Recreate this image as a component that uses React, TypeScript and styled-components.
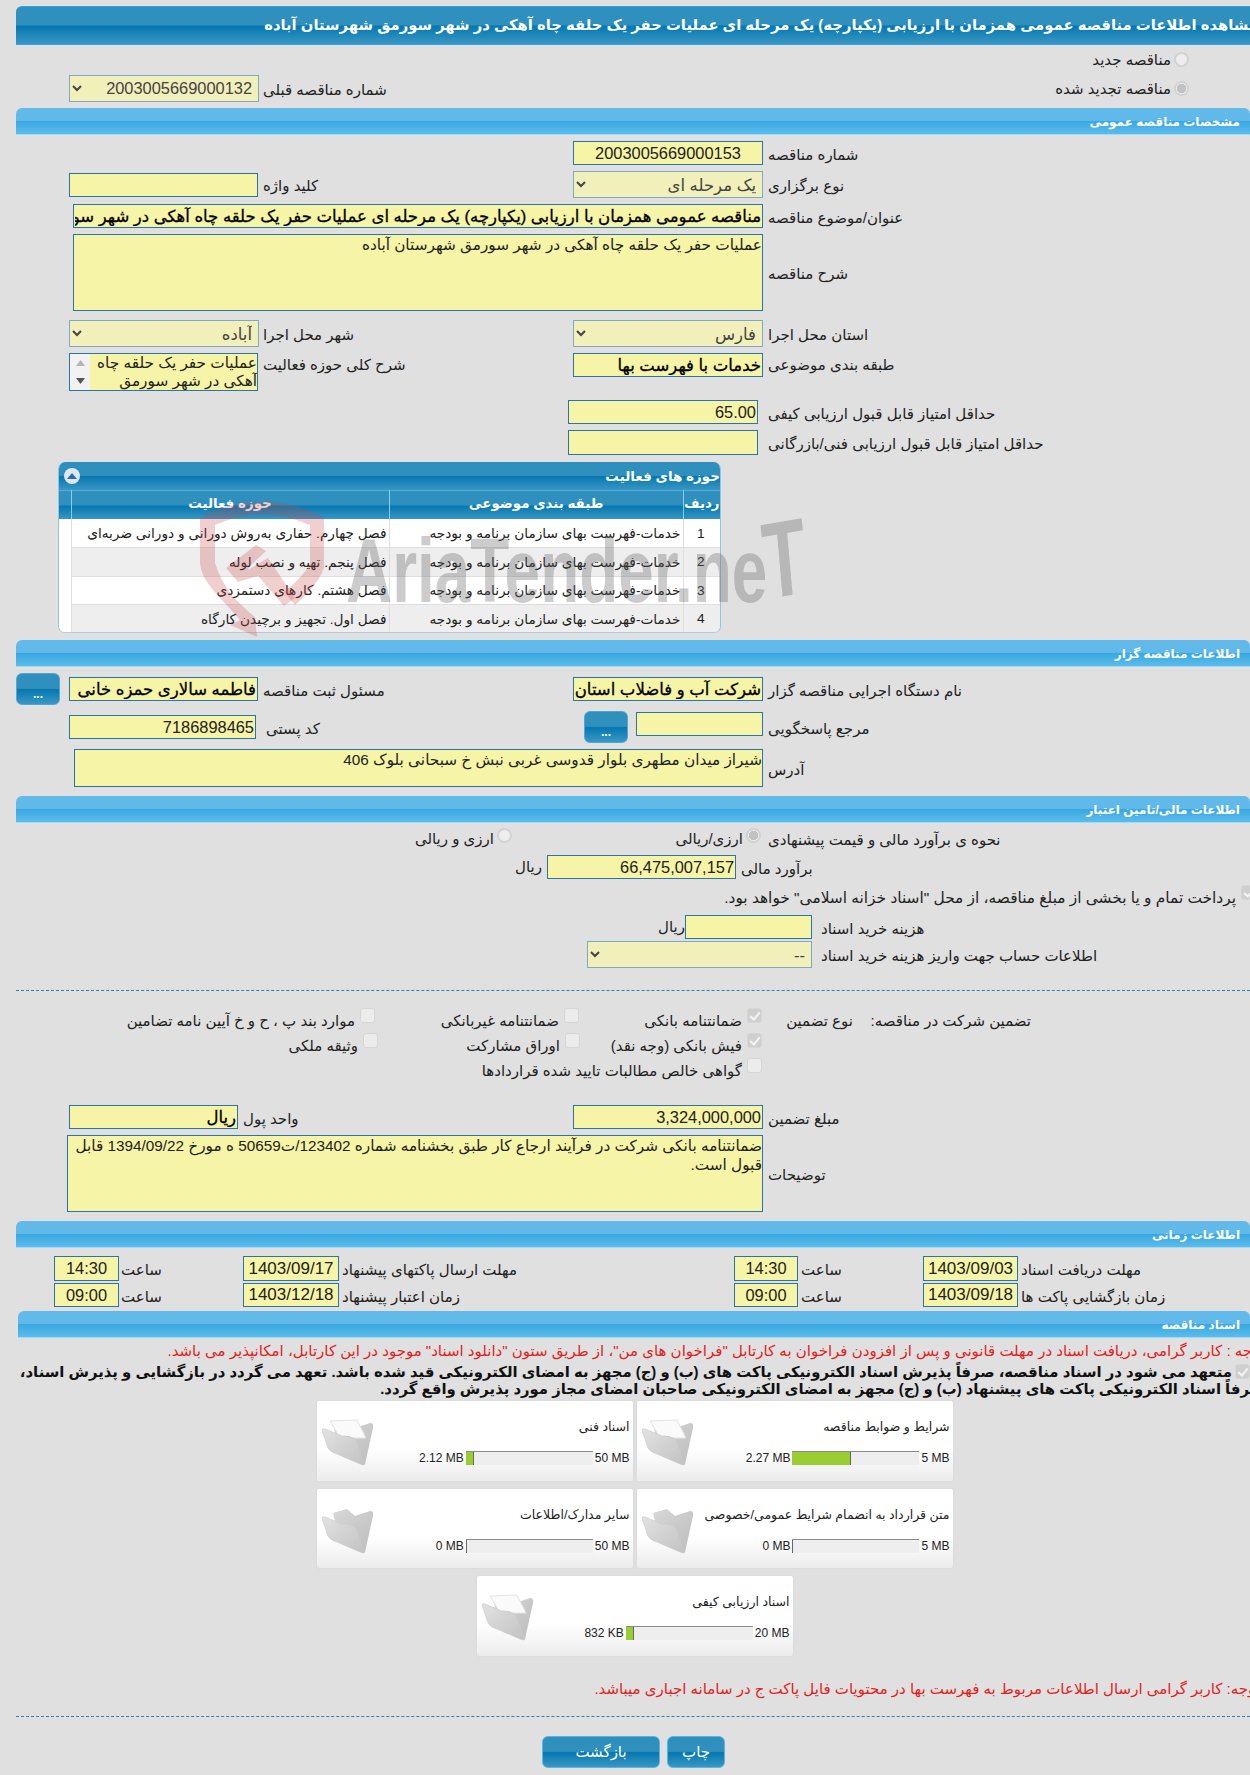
import React from "react";
import styled, { createGlobalStyle } from "styled-components";

const TEXT_FONT = `"Liberation Sans", "DejaVu Sans", sans-serif`;

const darkBar = `linear-gradient(to bottom, #2f90bd 0%, #2f8fbd 48%, #0578b0 52%, #3a97c3 100%)`;
const lightBar = `linear-gradient(to bottom, #62baea 0%, #60b9e9 48%, #39a8e0 52%, #5bbcec 100%)`;

const GlobalStyle = createGlobalStyle`
  html, body {
    margin: 0;
    padding: 0;
    background: #e0e0e0;
  }
  body {
    font-family: ${TEXT_FONT};
    font-size: 15px;
    color: #222;
  }
`;

const Page = styled.div`
  position: relative;
  width: 1250px;
  height: 1775px;
  overflow: hidden;
  direction: rtl;
  background: #e0e0e0;
`;

const TitleBar = styled.div`
  margin: 6px 0 0 16px;
  height: 39px;
  box-sizing: border-box;
  border-top: 1px solid #36a2e6;
  border-bottom: 1px solid #36a2e6;
  border-top-left-radius: 6px;
  background: ${darkBar};
  color: #fff;
  font-size: 14.8px;
  font-weight: bold;
  line-height: 37px;
  white-space: nowrap;
  overflow: hidden;
`;

const TitleText = styled.span`
  display: inline-block;
  margin-right: -8px;
`;

const SectionBar = styled.div<{ $top: number; $left?: number }>`
  margin: ${(p) => p.$top}px 0 0 ${(p) => p.$left ?? 16}px;
  height: 27px;
  box-sizing: border-box;
  border-bottom: 1px solid #9bdcf7;
  border-top-left-radius: 6px;
  border-top-right-radius: 6px;
  background: ${lightBar};
  color: #fff;
  font-size: 12px;
  font-weight: bold;
  line-height: 28px;
  padding-right: 10px;
`;

const FormRow = styled.div<{ $top: number; $h: number; $cols?: string; $align?: string }>`
  display: grid;
  grid-template-columns: ${(p) => p.$cols ?? "482px 195px 315px 189px 69px"};
  align-items: ${(p) => p.$align ?? "center"};
  margin-top: ${(p) => p.$top}px;
  height: ${(p) => p.$h}px;
`;

const Label = styled.label<{ $pad?: number }>`
  text-align: left;
  padding-top: 3px;
  padding-left: ${(p) => p.$pad ?? 0}px;
  font-size: 15px;
  white-space: nowrap;
  color: #222;
`;

const fieldBase = `
  box-sizing: border-box;
  display: block;
  background: #f6f4a6;
  border: 1px solid #2a75a8;
  border-radius: 0;
  padding: 0 1px;
  margin: 0;
  outline: none;
  direction: rtl;
  font-family: ${TEXT_FONT};
  color: #222;
`;

const Field = styled.input<{ $w: number; $h?: number; $mr?: number; $strong?: boolean; $size?: number; $center?: boolean }>`
  ${fieldBase}
  width: ${(p) => p.$w}px;
  height: ${(p) => p.$h ?? 24}px;
  margin-right: ${(p) => p.$mr ?? 5}px;
  font-size: ${(p) => p.$size ?? (p.$strong ? 16.5 : 16.4)}px;
  color: ${(p) => (p.$strong ? "#000" : "#222")};
  -webkit-text-stroke: ${(p) => (p.$strong ? "0.3px #000" : "0")};
  text-align: ${(p) => (p.$center ? "center" : "right")};
`;

const Area = styled.textarea<{ $w: number; $h: number; $mr?: number }>`
  ${fieldBase}
  width: ${(p) => p.$w}px;
  height: ${(p) => p.$h}px;
  margin-right: ${(p) => p.$mr ?? 5}px;
  padding: 0;
  resize: none;
  overflow: hidden;
  font-size: 15.3px;
  line-height: 19px;
`;

const Dropdown = styled.select<{ $w: number; $mr?: number; $size?: number }>`
  ${fieldBase}
  width: ${(p) => p.$w}px;
  height: 27px;
  margin-right: ${(p) => p.$mr ?? 5}px;
  background: #f1efba;
  border: 1px solid #7fa9c2;
  font-size: ${(p) => p.$size ?? 16.5}px;
  color: #444;
  opacity: 1;
  padding-right: 2px;
`;

const Wide = styled.div<{ $from: number; $to: number }>`
  grid-column: ${(p) => p.$from} / ${(p) => p.$to};
`;

const InlineCell = styled.div<{ $gap?: number; $mr?: number }>`
  display: flex;
  align-items: center;
  gap: ${(p) => p.$gap ?? 0}px;
  margin-right: ${(p) => p.$mr ?? 0}px;
  white-space: nowrap;
`;

const TopField = styled(Field)`
  align-self: flex-start;
  margin-top: 1px;
`;

const Radio = styled.input.attrs({ type: "radio" })<{ $dy?: number }>`
  appearance: none;
  flex: none;
  width: 15px;
  height: 15px;
  margin: ${(p) => p.$dy ?? 0}px 0 0;
  box-sizing: border-box;
  border: 2px solid #d2d2d2;
  border-radius: 50%;
  background: #ededed;
  align-self: flex-start;
  &:checked {
    background: radial-gradient(circle, #c2c2c2 0 4.5px, #ededed 5px);
  }
`;

const Check = styled.input.attrs({ type: "checkbox" })`
  appearance: none;
  flex: none;
  position: relative;
  width: 15px;
  height: 15px;
  margin: 0;
  box-sizing: border-box;
  border: 1px solid #d6d6d6;
  border-radius: 3px;
  background: #ececec;
  align-self: flex-start;
  &:checked {
    background: #cfcfcf;
  }
  &:checked::after {
    content: "";
    position: absolute;
    left: 4px;
    top: 1px;
    width: 4px;
    height: 8px;
    border: solid #f4f4f4;
    border-width: 0 2px 2px 0;
    transform: rotate(40deg);
  }
`;

const OptionText = styled.span<{ $size?: number }>`
  font-size: ${(p) => p.$size ?? 15}px;
  white-space: nowrap;
  padding-top: 2px;
`;

const RadioOption = styled.div<{ $w?: number; $mr?: number }>`
  display: flex;
  align-items: center;
  gap: 3px;
  width: ${(p) => (p.$w ? `${p.$w}px` : "auto")};
  margin-right: ${(p) => p.$mr ?? 0}px;
  height: 24px;
`;

const CheckOption = styled.div<{ $nudge?: number }>`
  display: flex;
  align-items: center;
  gap: 5px;
  height: 24px;
  margin-right: ${(p) => p.$nudge ?? 0}px;
`;

const DotoLine = styled.div<{ $top: number }>`
  margin: ${(p) => p.$top}px 0 0 16px;
  border-top: 1px dashed #2c81b5;
`;

const Unit = styled.span`
  font-size: 15px;
  white-space: nowrap;
`;

const PickButton = styled.button<{ $mr?: number }>`
  flex: none;
  width: 44px;
  height: 32px;
  margin: 0 ${(p) => p.$mr ?? 0}px 0 0;
  padding: 9px 0 0;
  box-sizing: border-box;
  border: 1px solid #4ea9da;
  border-radius: 6px;
  background: ${darkBar};
  color: #fff;
  font: bold 12px ${TEXT_FONT};
  line-height: 12px;
`;

/* activity table */
const Panel = styled.div`
  margin: 7px 529px 0 58px;
  height: 171px;
  box-sizing: border-box;
  border-radius: 7px;
  border-bottom: 1px solid #a9cfe6;
  border-right: 1px solid #8fc4e4;
  border-left: 1px solid #8fc4e4;
  background: #fff;
  overflow: hidden;
`;

const PanelHead = styled.div`
  display: flex;
  justify-content: space-between;
  align-items: center;
  height: 28px;
  box-sizing: border-box;
  padding: 0 0 0 5px;
  background: ${darkBar};
  color: #fff;
  font-size: 13.5px;
  font-weight: bold;
`;

const Collapse = styled.span`
  display: flex;
  align-items: center;
  justify-content: center;
  width: 16px;
  height: 16px;
  border-radius: 50%;
  background: #dfe7f5;
`;

const Table = styled.table`
  width: 100%;
  border-collapse: collapse;
  table-layout: fixed;
`;

const HeadCell = styled.th`
  height: 25px;
  padding: 0 0 3px;
  border-top: 1px solid #55a9d8;
  border-left: 1px solid #7fd0f2;
  background: ${darkBar};
  color: #fff;
  font-size: 13.4px;
  font-weight: bold;
  text-align: center;
  white-space: nowrap;
  &:last-child {
    border-left: 0;
  }
`;

const BodyRow = styled.tr<{ $alt: boolean }>`
  height: 28.5px;
  background: ${(p) => (p.$alt ? "#eeeeee" : "#ffffff")};
`;

const BodyCell = styled.td<{ $center?: boolean }>`
  padding: 0 2px 0 0;
  border-left: 1px solid #dedede;
  border-bottom: 1px solid #dedede;
  font-size: 13.7px;
  color: #222;
  text-align: ${(p) => (p.$center ? "center" : "right")};
  white-space: nowrap;
  overflow: hidden;
`;

const SpacerCell = styled.td`
  padding: 0;
  background: #fff;
`;

/* watermark on top of the table */
const WatermarkShield = styled.svg`
  position: absolute;
  left: 198px;
  top: 498px;
  pointer-events: none;
`;

const WatermarkText = styled.div`
  position: absolute;
  left: 346px;
  top: 526px;
  direction: ltr;
  font-family: "Liberation Sans", sans-serif;
  font-weight: bold;
  font-size: 90px;
  line-height: 90px;
  color: rgba(95, 95, 95, 0.32);
  white-space: nowrap;
  transform: scaleX(0.71);
  transform-origin: left top;
  pointer-events: none;
`;

const WatermarkLastT = styled.span`
  display: inline-block;
  transform: rotate(-7deg) scale(1.1, 1.2);
  transform-origin: bottom left;
`;

/* notes */
const RedNote = styled.div<{ $top: number; $h: number; $shift: number }>`
  margin: ${(p) => p.$top}px ${(p) => -p.$shift}px 0 0;
  height: ${(p) => p.$h}px;
  line-height: ${(p) => p.$h}px;
  font-size: 15px;
  color: #e21e1e;
  white-space: nowrap;
`;

const PledgeBlock = styled.div`
  margin-right: -14px;
  height: 33px;
  font-size: 14.85px;
  font-weight: bold;
  line-height: 17px;
  color: #111;
  white-space: nowrap;
`;

const PledgeCheck = styled(Check)`
  display: inline-block;
  vertical-align: top;
  margin: 0 14px 0 3px;
`;

/* documents */
const CardGrid = styled.div`
  display: flex;
  flex-wrap: wrap;
  justify-content: center;
  gap: 8px 4px;
  margin: 4px 297px 0 316px;
`;

const DocCard = styled.div`
  display: flex;
  justify-content: space-between;
  width: 316px;
  height: 79.5px;
  box-sizing: border-box;
  padding: 0 3px 0 0;
  border-radius: 2px;
  background: linear-gradient(to bottom, #ffffff 0%, #ffffff 60%, #ececec 100%);
  box-shadow: 0 0 2px #d2d2d2;
`;

const DocInfo = styled.div`
  display: flex;
  flex-direction: column;
`;

const DocTitle = styled.div`
  height: 18px;
  margin-top: 17px;
  line-height: 18px;
  font-size: 12.5px;
  color: #222;
  white-space: nowrap;
`;

const MeterRow = styled.div`
  display: flex;
  align-items: center;
  gap: 2px;
  margin-top: 15px;
  font-size: 12px;
  color: #222;
  white-space: nowrap;
`;

const MeterSize = styled.span`
  direction: ltr;
  unicode-bidi: isolate;
`;

const MeterTrack = styled.div`
  direction: ltr;
  width: 127px;
  height: 14px;
  box-sizing: border-box;
  border-top: 1px solid #8a8a8a;
  background: #eeeeee;
`;

const MeterFill = styled.div`
  box-sizing: content-box;
  height: 13px;
  background: #9acd32;
  border-right: 1px solid #666;
`;

const FolderIcon = styled.svg`
  flex: none;
  margin: 17px 0 0 3px;
`;

const ButtonBar = styled.div`
  display: flex;
  gap: 7px;
  margin: 19px 525px 0 0;
`;

const ActionButton = styled.button<{ $w: number }>`
  width: ${(p) => p.$w}px;
  height: 32px;
  box-sizing: border-box;
  padding: 0;
  border: 1px solid #58b5e6;
  border-radius: 6px;
  background: ${darkBar};
  color: #fff;
  font: 15px ${TEXT_FONT};
`;

const ScrollWrap = styled.div`
  display: flex;
  width: 189px;
  height: 38px;
  box-sizing: border-box;
  border: 1px solid #2a75a8;
  background: #f6f4a6;
`;

const ScrollText = styled.textarea`
  flex: 1;
  min-width: 0;
  padding: 0;
  border: 0;
  outline: none;
  resize: none;
  overflow: hidden;
  background: transparent;
  direction: rtl;
  font-family: ${TEXT_FONT};
  font-size: 15.3px;
  line-height: 18px;
  color: #222;
`;

const ScrollRail = styled.div`
  flex: none;
  display: flex;
  flex-direction: column;
  justify-content: space-around;
  align-items: center;
  width: 20px;
  background: #f2f2f2;
`;

const activities = [
  "فصل چهارم. حفاری به‌روش دورانی و دورانی ضربه‌ای",
  "فصل پنجم. تهیه و نصب لوله",
  "فصل هشتم. کارهای دستمزدی",
  "فصل اول. تجهیز و برچیدن کارگاه",
];

const docs = [
  { title: "شرایط و ضوابط مناقصه", used: "2.27 MB", max: "5 MB", fill: 58, paper: true },
  { title: "اسناد فنی", used: "2.12 MB", max: "50 MB", fill: 7, paper: true },
  { title: "متن قرارداد به انضمام شرایط عمومی/خصوصی", used: "0 MB", max: "5 MB", fill: 0, paper: false },
  { title: "سایر مدارک/اطلاعات", used: "0 MB", max: "50 MB", fill: 0, paper: false },
  { title: "اسناد ارزیابی کیفی", used: "832 KB", max: "20 MB", fill: 7, paper: true },
];

const timeCols = "229px 98px 122px 67px 392px 99px 122px 67px 1fr";
const guaranteeCols = "219px 178px 91px 183px 204px 1fr";

const Folder = ({ paper }: { paper: boolean }) => (
  <FolderIcon width="56" height="50" viewBox="0 0 56 50">
    <defs>
      <linearGradient id="folderBack" x1="0" y1="0" x2="1" y2="1">
        <stop offset="0" stopColor="#d8d8d8" />
        <stop offset="1" stopColor="#bcbcbc" />
      </linearGradient>
      <linearGradient id="folderFront" x1="0" y1="0" x2="1" y2="1">
        <stop offset="0" stopColor="#e2e2e2" />
        <stop offset="1" stopColor="#c2c2c2" />
      </linearGradient>
    </defs>
    <path d="M13 7 L27 3 L35 10 L50 5 Q54 5 53 10 L45 46 L20 35 Z" fill="url(#folderBack)" />
    {paper && <path d="M10 3 L37 2 L46 20 L20 20 Z" fill="#fafafa" stroke="#e4e4e4" />}
    <path d="M2 12 Q2 10 5 11 L22 18 Q30 17 36 22 L45 46 Q44 48 40 46 L17 36 Q10 34 8 30 Z" fill="url(#folderFront)" stroke="#c8c8c8" strokeWidth="0.6" />
  </FolderIcon>
);

const ScrollArea = () => (
  <ScrollWrap>
    <ScrollText readOnly defaultValue="عملیات حفر یک حلقه چاه آهکی در شهر سورمق" />
    <ScrollRail>
      <svg width="9" height="6" viewBox="0 0 9 6">
        <path d="M0 6 L4.5 0 L9 6 Z" fill="#b4b4b4" />
      </svg>
      <svg width="9" height="6" viewBox="0 0 9 6">
        <path d="M0 0 L4.5 6 L9 0 Z" fill="#555" />
      </svg>
    </ScrollRail>
  </ScrollWrap>
);

const App = () => {
  return (
    <Page>
      <GlobalStyle />
      <TitleBar>
        <TitleText>
          مشاهده اطلاعات مناقصه عمومی همزمان با ارزیابی (یکپارچه) یک مرحله ای عملیات حفر یک حلقه چاه آهکی در شهر سورمق شهرستان آباده
        </TitleText>
      </TitleBar>

      <FormRow $top={0} $h={28} $cols="1fr">
        <RadioOption $mr={61}>
          <Radio $dy={5} disabled />
          <OptionText>مناقصه جدید</OptionText>
        </RadioOption>
      </FormRow>
      <FormRow $top={0} $h={30} $cols="677px 315px 258px">
        <RadioOption $mr={61}>
          <Radio $dy={5} disabled defaultChecked />
          <OptionText>مناقصه تجدید شده</OptionText>
        </RadioOption>
        <Label $pad={5}>شماره مناقصه قبلی</Label>
        <Dropdown $w={190} $mr={-1} disabled $size={16.4}>
          <option>2003005669000132</option>
        </Dropdown>
      </FormRow>

      <SectionBar $top={5}>مشخصات مناقصه عمومی</SectionBar>

      <FormRow $top={0} $h={36}>
        <Label>شماره مناقصه</Label>
        <Field $w={190} $center readOnly defaultValue="2003005669000153" />
      </FormRow>
      <FormRow $top={0} $h={27}>
        <Label>نوع برگزاری</Label>
        <Dropdown $w={190} disabled>
          <option>یک مرحله ای</option>
        </Dropdown>
        <Label $pad={5}>کلید واژه</Label>
        <Field $w={189} $mr={0} readOnly />
      </FormRow>
      <FormRow $top={6} $h={24}>
        <Label>عنوان/موضوع مناقصه</Label>
        <Wide $from={2} $to={5}>
          <Field
            $w={690}
            $strong
            readOnly
            defaultValue="مناقصه عمومی همزمان با ارزیابی (یکپارچه) یک مرحله ای عملیات حفر یک حلقه چاه آهکی در شهر سورمق شهرستان آباده"
          />
        </Wide>
      </FormRow>
      <FormRow $top={6} $h={77}>
        <Label>شرح مناقصه</Label>
        <Wide $from={2} $to={5}>
          <Area $w={690} $h={77} readOnly defaultValue="عملیات حفر یک حلقه چاه آهکی در شهر سورمق شهرستان آباده" />
        </Wide>
      </FormRow>
      <FormRow $top={9} $h={27}>
        <Label>استان محل اجرا</Label>
        <Dropdown $w={190} disabled>
          <option>فارس</option>
        </Dropdown>
        <Label $pad={5}>شهر محل اجرا</Label>
        <Dropdown $w={190} $mr={-1} disabled>
          <option>آباده</option>
        </Dropdown>
      </FormRow>
      <FormRow $top={6} $h={38} $align="start">
        <Label>طبقه بندی موضوعی</Label>
        <Field $w={190} $strong readOnly defaultValue="خدمات با فهرست بها" />
        <Label $pad={5}>شرح کلی حوزه فعالیت</Label>
        <ScrollArea />
      </FormRow>
      <FormRow $top={9} $h={24}>
        <Label>حداقل امتیاز قابل قبول ارزیابی کیفی</Label>
        <Field $w={190} $mr={10} readOnly defaultValue="65.00" />
      </FormRow>
      <FormRow $top={6} $h={25}>
        <Label>حداقل امتیاز قابل قبول ارزیابی فنی/بازرگانی</Label>
        <Field $w={190} $h={25} $mr={10} readOnly />
      </FormRow>

      <Panel>
        <PanelHead>
          <span>حوزه های فعالیت</span>
          <Collapse>
            <svg width="10" height="6" viewBox="0 0 10 6">
              <path d="M0 6 L5 0 L10 6 Z" fill="#2a6fa8" />
            </svg>
          </Collapse>
        </PanelHead>
        <Table>
          <colgroup>
            <col style={{ width: 37 }} />
            <col style={{ width: 294 }} />
            <col style={{ width: 318 }} />
            <col />
          </colgroup>
          <thead>
            <tr>
              <HeadCell>ردیف</HeadCell>
              <HeadCell>طبقه بندی موضوعی</HeadCell>
              <HeadCell>حوزه فعالیت</HeadCell>
              <HeadCell />
            </tr>
          </thead>
          <tbody>
            {activities.map((item, i) => (
              <BodyRow key={item} $alt={i % 2 === 1}>
                <BodyCell $center>{i + 1}</BodyCell>
                <BodyCell>خدمات-فهرست بهای سازمان برنامه و بودجه</BodyCell>
                <BodyCell>{item}</BodyCell>
                <SpacerCell />
              </BodyRow>
            ))}
          </tbody>
        </Table>
      </Panel>

      <SectionBar $top={7}>اطلاعات مناقصه گزار</SectionBar>

      <FormRow $top={6} $h={32}>
        <Label>نام دستگاه اجرایی مناقصه گزار</Label>
        <Field $w={190} $strong readOnly defaultValue="شرکت آب و فاضلاب استان" />
        <Label $pad={5}>مسئول ثبت مناقصه</Label>
        <Field $w={189} $mr={0} $strong readOnly defaultValue="فاطمه سالاری حمزه خانی" />
        <PickButton $mr={9}>...</PickButton>
      </FormRow>
      <FormRow $top={6} $h={32}>
        <Label>مرجع پاسخگویی</Label>
        <InlineCell $gap={8} $mr={5}>
          <TopField $w={127} $mr={0} readOnly />
          <PickButton>...</PickButton>
        </InlineCell>
        <Label $pad={8}>کد پستی</Label>
        <Field $w={187} $mr={2} readOnly defaultValue="7186898465" />
      </FormRow>
      <FormRow $top={6} $h={38}>
        <Label>آدرس</Label>
        <Wide $from={2} $to={5}>
          <Area $w={689} $h={38} readOnly defaultValue="شیراز میدان مطهری بلوار قدوسی غربی نبش خ سبحانی بلوک 406" />
        </Wide>
      </FormRow>

      <SectionBar $top={9}>اطلاعات مالی/تامین اعتبار</SectionBar>

      <FormRow $top={3} $h={24} $cols="482px 1fr">
        <Label>نحوه ی برآورد مالی و قیمت پیشنهادی</Label>
        <InlineCell>
          <RadioOption $w={249} $mr={7}>
            <Radio $dy={2} disabled defaultChecked />
            <OptionText>ارزی/ریالی</OptionText>
          </RadioOption>
          <RadioOption>
            <Radio $dy={2} disabled />
            <OptionText>ارزی و ریالی</OptionText>
          </RadioOption>
        </InlineCell>
      </FormRow>
      <FormRow $top={5} $h={24} $cols="509px 199px 1fr">
        <Label>برآورد مالی</Label>
        <Field $w={189} readOnly defaultValue="66,475,007,157" />
        <Unit>ریال</Unit>
      </FormRow>
      <FormRow $top={6} $h={22} $cols="1fr">
        <CheckOption $nudge={-6}>
          <Check disabled defaultChecked />
          <OptionText $size={15.4}>پرداخت تمام و یا بخشی از مبلغ مناقصه، از محل "اسناد خزانه اسلامی" خواهد بود.</OptionText>
        </CheckOption>
      </FormRow>
      <FormRow $top={8} $h={24} $cols="429px 136px 1fr">
        <Label>هزینه خرید اسناد</Label>
        <Field $w={127} $mr={9} readOnly />
        <Unit>ریال</Unit>
      </FormRow>
      <FormRow $top={2} $h={27} $cols="429px 1fr">
        <Label>اطلاعات حساب جهت واریز هزینه خرید اسناد</Label>
        <Dropdown $w={225} $mr={9} disabled>
          <option>--</option>
        </Dropdown>
      </FormRow>

      <DotoLine $top={22} />

      <FormRow $top={16} $h={25} $cols={guaranteeCols}>
        <span />
        <OptionText>تضمین شرکت در مناقصه:</OptionText>
        <OptionText>نوع تضمین</OptionText>
        <CheckOption>
          <Check disabled defaultChecked />
          <OptionText>ضمانتنامه بانکی</OptionText>
        </CheckOption>
        <CheckOption>
          <Check disabled />
          <OptionText>ضمانتنامه غیربانکی</OptionText>
        </CheckOption>
        <CheckOption>
          <Check disabled />
          <OptionText>موارد بند پ ، ح و خ آیین نامه تضامین</OptionText>
        </CheckOption>
      </FormRow>
      <FormRow $top={0} $h={25} $cols={guaranteeCols}>
        <span />
        <span />
        <span />
        <CheckOption>
          <Check disabled defaultChecked />
          <OptionText>فیش بانکی (وجه نقد)</OptionText>
        </CheckOption>
        <CheckOption $nudge={-1}>
          <Check disabled />
          <OptionText>اوراق مشارکت</OptionText>
        </CheckOption>
        <CheckOption $nudge={-3}>
          <Check disabled />
          <OptionText>وثیقه ملکی</OptionText>
        </CheckOption>
      </FormRow>
      <FormRow $top={0} $h={25} $cols="488px 1fr">
        <span />
        <CheckOption>
          <Check disabled />
          <OptionText>گواهی خالص مطالبات تایید شده قراردادها</OptionText>
        </CheckOption>
      </FormRow>

      <FormRow $top={23} $h={24} $cols="482px 195px 335px 169px 1fr">
        <Label>مبلغ تضمین</Label>
        <Field $w={190} readOnly defaultValue="3,324,000,000" />
        <Label $pad={5}>واحد پول</Label>
        <Field $w={169} $mr={0} $strong readOnly defaultValue="ریال" />
      </FormRow>
      <FormRow $top={6} $h={77}>
        <Label>توضیحات</Label>
        <Wide $from={2} $to={6}>
          <Area
            $w={696}
            $h={77}
            readOnly
            defaultValue="ضمانتنامه بانکی شرکت در فرآیند ارجاع کار طبق بخشنامه شماره 123402/ت50659 ه مورخ 1394/09/22 قابل قبول است."
          />
        </Wide>
      </FormRow>

      <SectionBar $top={9}>اطلاعات زمانی</SectionBar>

      <FormRow $top={8} $h={25} $cols={timeCols}>
        <Label>مهلت دریافت اسناد</Label>
        <Field $w={95} $h={25} $mr={3} $size={17} $center readOnly defaultValue="1403/09/03" />
        <Label>ساعت</Label>
        <Field $w={64} $h={25} $mr={3} $center readOnly defaultValue="14:30" />
        <Label>مهلت ارسال پاکتهای پیشنهاد</Label>
        <Field $w={96} $h={25} $mr={3} $size={17} $center readOnly defaultValue="1403/09/17" />
        <Label>ساعت</Label>
        <Field $w={65} $h={25} $mr={2} $center readOnly defaultValue="14:30" />
      </FormRow>
      <FormRow $top={2} $h={24} $cols={timeCols}>
        <Label>زمان بازگشایی پاکت ها</Label>
        <Field $w={95} $mr={3} $size={17} $center readOnly defaultValue="1403/09/18" />
        <Label>ساعت</Label>
        <Field $w={64} $mr={3} $center readOnly defaultValue="09:00" />
        <Label>زمان اعتبار پیشنهاد</Label>
        <Field $w={96} $mr={3} $size={17} $center readOnly defaultValue="1403/12/18" />
        <Label>ساعت</Label>
        <Field $w={65} $mr={2} $center readOnly defaultValue="09:00" />
      </FormRow>

      <SectionBar $top={4} $left={18}>اسناد مناقصه</SectionBar>

      <RedNote $top={0} $h={26} $shift={14}>
        توجه : کاربر گرامی، دریافت اسناد در مهلت قانونی و پس از افزودن فراخوان به کارتابل "فراخوان های من"، از طریق ستون "دانلود اسناد" موجود در این کارتابل، امکانپذیر می باشد.
      </RedNote>
      <PledgeBlock>
        <PledgeCheck disabled defaultChecked />
        متعهد می شود در اسناد مناقصه، صرفاً پذیرش اسناد الکترونیکی پاکت های (ب) و (ج) مجهز به امضای الکترونیکی قید شده باشد. تعهد می گردد در بازگشایی و پذیرش اسناد،
        <br />
        صرفاً اسناد الکترونیکی پاکت های پیشنهاد (ب) و (ج) مجهز به امضای الکترونیکی صاحبان امضای مجاز مورد پذیرش واقع گردد.
      </PledgeBlock>

      <CardGrid>
        {docs.map((doc) => (
          <DocCard key={doc.title}>
            <DocInfo>
              <DocTitle>{doc.title}</DocTitle>
              <MeterRow>
                <MeterSize>{doc.max}</MeterSize>
                <MeterTrack>
                  <MeterFill style={{ width: doc.fill }} />
                </MeterTrack>
                <MeterSize>{doc.used}</MeterSize>
              </MeterRow>
            </DocInfo>
            <Folder paper={doc.paper} />
          </DocCard>
        ))}
      </CardGrid>

      <RedNote $top={23} $h={20} $shift={10}>
        توجه: کاربر گرامی ارسال اطلاعات مربوط به فهرست بها در محتویات فایل پاکت ج در سامانه اجباری میباشد.
      </RedNote>

      <DotoLine $top={17} />

      <ButtonBar>
        <ActionButton $w={58}>چاپ</ActionButton>
        <ActionButton $w={118}>بازگشت</ActionButton>
      </ButtonBar>

      <WatermarkShield width="130" height="142" viewBox="0 0 130 142">
        <path
          d="M2 19 Q64 -12 126 19 L126 69 Q122 85 97 107 L86 94 Q108 76 112 65 L112 27 Q64 6 17 27 L17 65 Q22 82 35 99 L52 115 L57 119 L59 139 L32 127 L42 122 L15 92 Q3 78 2 65 Z"
          fill="rgba(200, 70, 70, 0.26)"
        />
        <path
          d="M28 70 L58 47 L68 53 L52 68 L50 72 L70 60 L97 100 L86 108 L60 78 L40 84 Z"
          fill="rgba(200, 70, 70, 0.26)"
        />
      </WatermarkShield>
      <WatermarkText>
        AriaTender.ne<WatermarkLastT>T</WatermarkLastT>
      </WatermarkText>
    </Page>
  );
};

export default App;
